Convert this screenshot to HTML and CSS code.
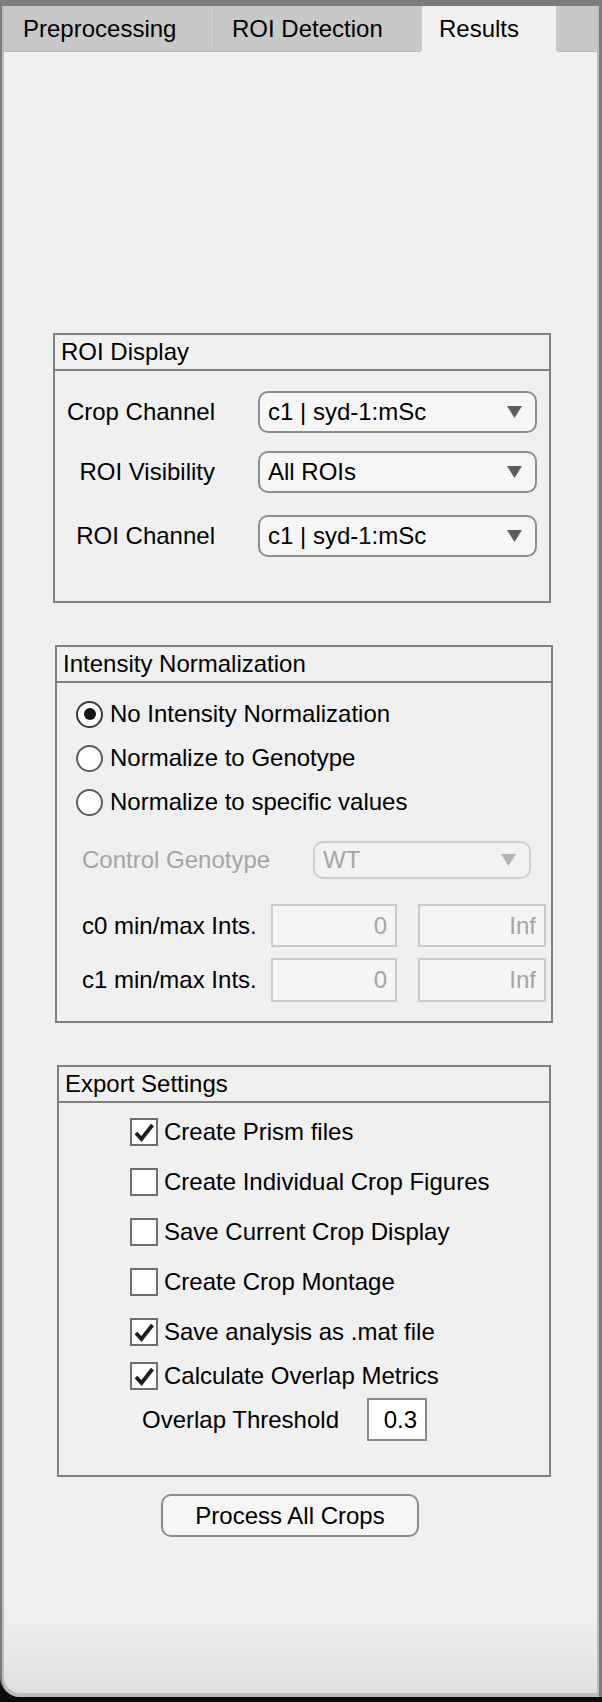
FILE: index.html
```html
<!DOCTYPE html>
<html>
<head>
<meta charset="utf-8">
<title>Results</title>
<link rel="stylesheet" href="styles.css">
</head>
<body>
<div class="window">
  <div class="frame">
    <div class="tabbar">
      <div class="tab tab-pre">Preprocessing</div>
      <div class="tab tab-roi">ROI Detection</div>
      <div class="tab tab-res">Results</div>
      <div class="tab-fill"></div>
    </div>
    <div class="panel">
      <section class="group group-roi">
        <div class="group-title">ROI Display</div>
        <div class="roi-body">
          <div class="sel-row">
            <span class="sel-label">Crop Channel</span>
            <div class="dropdown"><span>c1 | syd-1:mSc</span><svg class="arrow" width="15" height="12" viewBox="0 0 15 12"><path d="M0 0H15L7.5 12Z" fill="#5e5e5e"/></svg></div>
          </div>
          <div class="sel-row second">
            <span class="sel-label">ROI Visibility</span>
            <div class="dropdown"><span>All ROIs</span><svg class="arrow" width="15" height="12" viewBox="0 0 15 12"><path d="M0 0H15L7.5 12Z" fill="#5e5e5e"/></svg></div>
          </div>
          <div class="sel-row third">
            <span class="sel-label">ROI Channel</span>
            <div class="dropdown"><span>c1 | syd-1:mSc</span><svg class="arrow" width="15" height="12" viewBox="0 0 15 12"><path d="M0 0H15L7.5 12Z" fill="#5e5e5e"/></svg></div>
          </div>
        </div>
      </section>

      <section class="group group-int">
        <div class="group-title">Intensity Normalization</div>
        <div class="int-body">
          <div class="radio-row"><span class="radio on"></span><span>No Intensity Normalization</span></div>
          <div class="radio-row"><span class="radio"></span><span>Normalize to Genotype</span></div>
          <div class="radio-row"><span class="radio"></span><span>Normalize to specific values</span></div>
          <div class="cg-row">
            <span class="muted">Control Genotype</span>
            <div class="dropdown disabled"><span>WT</span><svg class="arrow" width="15" height="12" viewBox="0 0 15 12"><path d="M0 0H15L7.5 12Z" fill="#b4b4b4"/></svg></div>
          </div>
          <div class="range-row r0">
            <span class="range-label">c0 min/max Ints.</span>
            <div class="num">0</div>
            <div class="num num-max">Inf</div>
          </div>
          <div class="range-row r1">
            <span class="range-label">c1 min/max Ints.</span>
            <div class="num">0</div>
            <div class="num num-max">Inf</div>
          </div>
        </div>
      </section>

      <section class="group group-exp">
        <div class="group-title">Export Settings</div>
        <div class="exp-body">
          <div class="check-row"><span class="check"><svg width="24" height="24" viewBox="0 0 24 24"><path d="M4 13L9.5 19L20.5 5" fill="none" stroke="#1e1e1e" stroke-width="3.8" stroke-linejoin="miter"/></svg></span><span>Create Prism files</span></div>
          <div class="check-row"><span class="check"></span><span>Create Individual Crop Figures</span></div>
          <div class="check-row"><span class="check"></span><span>Save Current Crop Display</span></div>
          <div class="check-row"><span class="check"></span><span>Create Crop Montage</span></div>
          <div class="check-row"><span class="check"><svg width="24" height="24" viewBox="0 0 24 24"><path d="M4 13L9.5 19L20.5 5" fill="none" stroke="#1e1e1e" stroke-width="3.8" stroke-linejoin="miter"/></svg></span><span>Save analysis as .mat file</span></div>
          <div class="check-row tight"><span class="check"><svg width="24" height="24" viewBox="0 0 24 24"><path d="M4 13L9.5 19L20.5 5" fill="none" stroke="#1e1e1e" stroke-width="3.8" stroke-linejoin="miter"/></svg></span><span>Calculate Overlap Metrics</span></div>
          <div class="thr-row">
            <span class="thr-label">Overlap Threshold</span>
            <div class="thr-field">0.3</div>
          </div>
        </div>
      </section>

      <div class="btn">Process All Crops</div>
    </div>
  </div>
</div>
</body>
</html>
```

FILE: styles.css
```css
* {
  box-sizing: border-box;
}

html, body {
  margin: 0;
  padding: 0;
}

body {
  width: 602px;
  height: 1702px;
  overflow: hidden;
  background: #0c0c0c;
  font-family: "Liberation Sans", Arial, Helvetica, sans-serif;
  font-size: 24px;
  color: #000;
}

.window {
  height: 1697px;
  background: #7b7b7b;
  padding: 6px 3px 0 2px;
  border-bottom-left-radius: 20px;
}

.frame {
  height: 100%;
  background: #bdbdbd;
  padding: 0 2px 4px 2px;
  border-bottom-left-radius: 18px;
  display: flex;
  flex-direction: column;
}

.tabbar {
  flex: none;
  height: 46px;
  display: flex;
  background: #f0f0f0;
}

.tab {
  height: 46px;
  line-height: 46px;
  background: #c8c8c8;
  white-space: nowrap;
  box-shadow: inset 0 -1px 0 #b6b6b6;
}

.tab-pre {
  width: 211px;
  padding-left: 19px;
  border-right: 1px solid #b9b9b9;
}

.tab-roi {
  width: 207px;
  padding-left: 17px;
  border-bottom-right-radius: 4px;
}

.tab-res {
  width: 134px;
  padding-left: 17px;
  background: #f0f0f0;
  box-shadow: none;
}

.tab-fill {
  flex: 1;
  background: #c8c8c8;
  border-bottom-left-radius: 4px;
  box-shadow: inset 0 -1px 0 #b6b6b6;
}

.panel {
  flex: 1;
  background: linear-gradient(to bottom, #f0f0f0 0, #f0f0f0 1560px, #e0e0e0 100%);
  border-bottom-left-radius: 16px;
  display: flex;
  flex-direction: column;
  align-items: flex-start;
}

/* group boxes */
.group {
  flex: none;
  border: 2px solid #808080;
}

.group-roi {
  margin: 281px 0 0 49px;
  width: 498px;
}

.group-int {
  margin: 42px 0 0 51px;
  width: 498px;
}

.group-exp {
  margin: 42px 0 0 53px;
  width: 494px;
}

.group-title {
  height: 36px;
  line-height: 34px;
  padding-left: 6px;
  border-bottom: 2px solid #808080;
  white-space: nowrap;
}

/* ROI display */
.roi-body {
  padding: 20px 0 44px 0;
  display: flex;
  flex-direction: column;
}

.sel-row {
  height: 42px;
  display: grid;
  grid-template-columns: 160px 279px;
  column-gap: 43px;
  align-items: center;
}

.sel-row.second {
  margin-top: 18px;
}

.sel-row.third {
  margin-top: 22px;
}

.sel-label {
  text-align: right;
  white-space: nowrap;
}

.dropdown {
  height: 42px;
  border: 2px solid #8d8d8d;
  border-radius: 10px;
  background: #f6f6f6;
  display: flex;
  align-items: center;
  justify-content: space-between;
  padding: 0 13px 0 8px;
  white-space: nowrap;
}

.arrow {
  flex: none;
  display: block;
}

/* intensity normalization */
.int-body {
  padding: 9px 0 19px 0;
}

.radio-row {
  height: 44px;
  display: flex;
  align-items: center;
  gap: 7px;
  padding-left: 19px;
  white-space: nowrap;
}

.radio {
  flex: none;
  width: 27px;
  height: 27px;
  border: 2px solid #5c5c5c;
  border-radius: 50%;
  background: #fff;
  display: flex;
  align-items: center;
  justify-content: center;
}

.radio.on {
  border-color: #3a3a3a;
}

.radio.on::after {
  content: "";
  width: 12px;
  height: 12px;
  border-radius: 50%;
  background: #141414;
}

.cg-row {
  margin-top: 17px;
  height: 38px;
  display: grid;
  grid-template-columns: 231px 218px;
  align-items: center;
  padding-left: 25px;
  white-space: nowrap;
}

.muted {
  color: #a4a4a4;
}

.dropdown.disabled {
  height: 38px;
  border-color: #cdcdcd;
  background: #f2f2f2;
  color: #a4a4a4;
  padding-left: 8px;
}

.range-row {
  display: flex;
  align-items: stretch;
  padding-left: 25px;
  white-space: nowrap;
}

.range-row.r0 {
  margin-top: 25px;
  height: 43px;
}

.range-row.r1 {
  margin-top: 11px;
  height: 44px;
}

.range-label {
  width: 189px;
  display: flex;
  align-items: center;
}

.num {
  width: 126px;
  border: 2px solid #cbcbcb;
  background: #f5f5f5;
  color: #a4a4a4;
  display: flex;
  align-items: center;
  justify-content: flex-end;
  padding-right: 8px;
}

.num-max {
  width: 128px;
  margin-left: 21px;
}

/* export settings */
.exp-body {
  padding: 15px 0 34px 0;
}

.check-row {
  height: 28px;
  display: flex;
  align-items: center;
  gap: 6px;
  padding-left: 71px;
  margin-top: 22px;
  white-space: nowrap;
}

.check-row:first-child {
  margin-top: 0;
}

.check-row.tight {
  margin-top: 16px;
}

.check {
  flex: none;
  width: 28px;
  height: 28px;
  border: 2px solid #6f6f6f;
  background: #fff;
  display: flex;
  align-items: center;
  justify-content: center;
}

.check svg {
  display: block;
}

.thr-row {
  margin-top: 8px;
  height: 43px;
  display: flex;
  align-items: center;
  padding-left: 83px;
  white-space: nowrap;
}

.thr-label {
  width: 225px;
}

.thr-field {
  width: 60px;
  height: 43px;
  border: 2px solid #8a8a8a;
  background: #fff;
  display: flex;
  align-items: center;
  justify-content: flex-end;
  padding-right: 8px;
}

/* button */
.btn {
  flex: none;
  margin: 17px 0 0 157px;
  width: 258px;
  height: 43px;
  border: 2px solid #8c8c8c;
  border-radius: 10px;
  background: #f6f6f6;
  display: flex;
  align-items: center;
  justify-content: center;
  white-space: nowrap;
}
```
